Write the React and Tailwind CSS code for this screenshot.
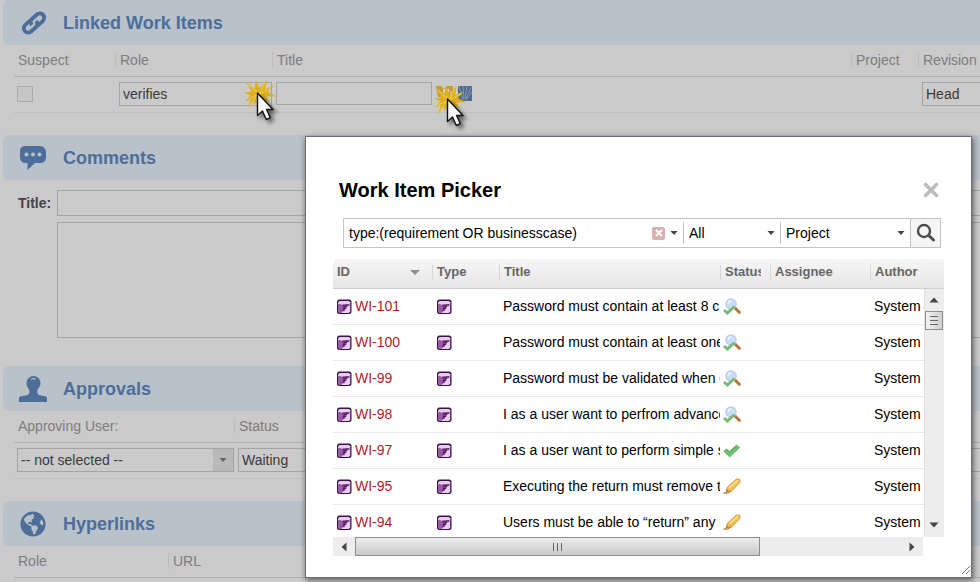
import React from "react";
import { FaGlobeAmericas } from "react-icons/fa";

function LinkIcon() {
  return (
    <svg viewBox="0 0 28 28" className="h-7 w-7" aria-hidden="true">
      <g transform="rotate(-42 15 14)" fill="none" stroke="#4c6e99" strokeWidth="3.8">
        <path d="M14 9.600H7.200a4.400 4.400 0 0 0 0 8.800h6.300a4.400 4.400 0 0 0 4.400-4.400" />
        <path d="M16 18.400h6.800a4.400 4.400 0 0 0 0-8.800h-6.300a4.400 4.400 0 0 0-4.400 4.400" />
      </g>
    </svg>
  );
}

function CommentIcon() {
  return (
    <svg viewBox="0 0 28 28" className="h-7 w-7" aria-hidden="true">
      <path d="M6 2h15a6 6 0 0 1 6 6v5.500a5.500 5.500 0 0 1-5.500 5.500H16l-7.500 7V19H6.500A5.500 5.500 0 0 1 1 13.500V7a5 5 0 0 1 5-5z" fill="#4c6e99" />
      <g fill="#b9c1cb">
        <circle cx="7.500" cy="10.500" r="2" />
        <circle cx="14" cy="10.500" r="2" />
        <circle cx="20.500" cy="10.500" r="2" />
      </g>
    </svg>
  );
}

function StampIcon() {
  return (
    <svg viewBox="0 0 28 28" className="h-7 w-7" aria-hidden="true">
      <path d="M14.500 1a7 7 0 0 1 7 7c0 3-1.300 4.200-2.500 6-.9 1.400-.9 2.600-.5 4 .4 1.500 1.500 2.200 3.500 2.500l4 .7c1.500.3 2 1 2 2.300V27H0v-3.500c0-1.300.5-2 2-2.300l4.500-.7c2-.3 3.300-1 3.700-2.500.4-1.400.4-2.600-.4-4C8.700 12.200 7.500 11 7.500 8a7 7 0 0 1 7-7z" fill="#4c6e99" />
      <path d="M11.500 5c.6-1.300 1.700-2 3-2s2.400.7 3 2c-.8-.4-1.800-.7-3-.7s-2.200.3-3 .7z" fill="#b9c1cb" />
    </svg>
  );
}

function RequirementIcon() {
  return (
    <svg viewBox="0 0 16 16" className="h-4 w-4 shrink-0" aria-hidden="true">
      <rect x="1" y="0.500" width="14.500" height="14.500" rx="2.500" fill="#3a1544" />
      <path d="M3.500 2h9.500l1.200 1.200v9.300L13 14H3.500L2 12.500v-9z" fill="#ebcaf3" />
      <path d="M2 5.500l1.500-.8 2 1 7.700-.4.300 1.500-3.300 1 .6 1.200-1.300 1-.7 1.400-1.600.8L5.500 14h-2L2 12.500z" fill="#9a58a8" />
      <path d="M6.500 6.300l6.700-.6M7 8l4-.6M7 9.600l3-.3M6.500 11.300l2-.2" fill="none" stroke="#451a50" strokeWidth="1.100" />
    </svg>
  );
}

function ReviewedIcon() {
  return (
    <svg viewBox="0 0 18 17" className="h-[17px] w-[18px]" aria-hidden="true">
      <path d="M11.500 9.500l4.800 4.800" stroke="#b5763d" strokeWidth="3" strokeLinecap="round" />
      <circle cx="8" cy="6" r="5.200" fill="#c7dcf5" stroke="#b4cdea" strokeWidth="1.200" />
      <path d="M5 5.500C5.500 3.500 7 3 8.500 3" fill="none" stroke="#f2f8ff" strokeWidth="1.500" />
      <path d="M1 12l3.400 3 7-6.500" fill="none" stroke="#78bb75" strokeWidth="3" />
    </svg>
  );
}

function ApprovedIcon() {
  return (
    <svg viewBox="0 0 18 17" className="h-[17px] w-[18px]" aria-hidden="true">
      <path d="M0.800 9.500l2.500-2.700 3.200 2.400 7-6.200L16.700 5.500l-10 9.500z" fill="#67b768" stroke="#58a75c" strokeWidth="0.600" />
      <path d="M2.300 9.200l4.200 3.500 9-8" fill="none" stroke="#8bd08a" strokeWidth="1" />
    </svg>
  );
}

function DraftIcon() {
  return (
    <svg viewBox="0 0 18 17" className="h-[17px] w-[18px]" aria-hidden="true">
      <path d="M13.300 1l3.500.2.400 3-8.200 8.600-4.200.4-.8-3.700z" fill="#f0bf55" stroke="#d69a36" strokeWidth="0.900" />
      <path d="M6.500 9.500l8.300-7" stroke="#fbe3a0" strokeWidth="1.600" />
      <path d="M4 9.500l1 3.700 4-.4-3.500 2.700L2.500 14z" fill="#b98a54" />
      <path d="M0.500 15.200l4-.2" stroke="#c79a62" strokeWidth="1.800" />
    </svg>
  );
}

function SearchIcon() {
  return (
    <svg viewBox="0 0 20 20" className="h-5 w-5" aria-hidden="true">
      <circle cx="8" cy="8" r="6" fill="none" stroke="#4d4d4d" strokeWidth="2.400" />
      <path d="M12.700 12.500l4.800 4.500" stroke="#4d4d4d" strokeWidth="3" strokeLinecap="round" />
    </svg>
  );
}

function Caret({ className = "text-[#444]" }) {
  return (
    <svg viewBox="0 0 8 4" className={`h-1 w-2 ${className}`} aria-hidden="true">
      <path d="M0.500 0h7L4 4z" fill="currentColor" />
    </svg>
  );
}

function ScrollArrow({ className = "" }) {
  return (
    <svg viewBox="0 0 10 10" className={`h-2.5 w-2.5 text-[#444] ${className}`} aria-hidden="true">
      <path d="M0.500 2.500h9L5 7.500z" fill="currentColor" />
    </svg>
  );
}

function ClickMark() {
  return (
    <svg viewBox="0 0 40 50" className="h-[50px] w-10" aria-hidden="true">
      <path
        d="M3.500 3.500L12.500 10.500L14 2.500L17.500 10L24.500 2L23 11L32 7.500L25.500 14L34.500 18.500L24 18.500L28 24L19 20.500L15 23L11.500 27L12 22L6 30.500L8.500 21.500L3 23.500L8 17.500L2 14.500L9.500 13.500Z"
        fill="#dfb01d"
      />
      <path d="M6 6l10 9M22.500 5l-5 11M29 9.500l-12 7M6 21.500l9-5M8 27l7-10" stroke="#ecc84a" strokeWidth="1.200" />
      <g className="drop-shadow-[3px_3px_2px_rgba(0,0,0,0.55)]">
        <path d="M15.500 15v22.500l5-4.500 3.800 8.500 4-1.800-3.700-8.200h6.400z" fill="#f8f8f8" stroke="#111" strokeWidth="1.400" strokeLinejoin="round" />
      </g>
    </svg>
  );
}

function SectionTitle({ icon, children }) {
  return (
    <div className="ml-[3px] flex h-[45px] items-center gap-4 rounded-l-md bg-[#b9c1cb] pl-4">
      <span className="flex w-7 justify-center">{icon}</span>
      <h2 className="text-lg font-bold text-[#4c6e99]">{children}</h2>
    </div>
  );
}

function HeadCell({ first, className = "", children }) {
  return (
    <th scope="col" className={`h-8 border-b border-[#b2b2b2] p-0 pb-0.5 text-left font-normal text-[#7d7d7d] ${className}`}>
      <div className={first ? "pl-1" : "flex h-4 items-center border-l border-[#bcbcbc] pl-1"}>{children}</div>
    </th>
  );
}

function FormCell({ first, children }) {
  return <td className={`h-9 border-b border-[#bebebe] p-0 pb-0.5 ${first ? "pl-[3px]" : "pl-1"}`}>{children}</td>;
}

const field = "border border-[#a3a5a5] bg-[#cacaca] px-[3px] text-[#3a3a3a] outline-none";
const formTable = "ml-3.5 w-[calc(100%-14px)] table-fixed border-separate border-spacing-0";

const items = [
  { id: "WI-101", title: "Password must contain at least 8 characters", status: "reviewed" },
  { id: "WI-100", title: "Password must contain at least one number", status: "reviewed" },
  { id: "WI-99", title: "Password must be validated when entered", status: "reviewed" },
  { id: "WI-98", title: "I as a user want to perfrom advanced search", status: "reviewed" },
  { id: "WI-97", title: "I as a user want to perform simple search", status: "approved" },
  { id: "WI-95", title: "Executing the return must remove the loan", status: "draft" },
  { id: "WI-94", title: "Users must be able to “return” any item", status: "draft" },
];

const statusIcons = { reviewed: <ReviewedIcon />, approved: <ApprovedIcon />, draft: <DraftIcon /> };

function PickerHead({ first, className = "", children }) {
  return (
    <th scope="col" className={`h-[30px] border-b border-[#cfcfcf] bg-linear-to-b from-[#f6f6f6] to-[#e6e6e6] p-0 pb-0.5 text-left text-[13px] text-[#666] ${className}`}>
      <div className={`flex h-4 items-center overflow-hidden ${first ? "pl-1" : "border-l border-[#d6d6d6] pl-1"}`}>{children}</div>
    </th>
  );
}

function Picker() {
  return (
    <div
      role="dialog"
      aria-label="Work Item Picker"
      className="absolute top-[136px] right-2 left-[305px] border border-[#6e6e6e] bg-white px-[27px] pt-[39px] pb-[21px] text-black shadow-[1px_2px_6px_rgba(0,0,0,0.6)]"
    >
      <div className="flex h-7 items-center justify-between pr-[5px] pl-1.5">
        <h2 className="text-xl font-bold">Work Item Picker</h2>
        <button type="button" aria-label="Close">
          <svg viewBox="0 0 16 16" className="h-4 w-4" aria-hidden="true">
            <path d="M2.500 2.500l11 11M13.500 2.500l-11 11" stroke="#bdbdbd" strokeWidth="3.600" strokeLinecap="round" />
          </svg>
        </button>
      </div>

      <form className="mt-3.5 mr-[3px] ml-2.5 flex h-[30px] border border-[#c4c4c4]" onSubmit={(e) => e.preventDefault()}>
        <div className="flex min-w-0 flex-1 items-center">
          <input aria-label="Query" defaultValue="type:(requirement OR businesscase)" className="min-w-0 flex-1 pl-[5px] outline-none" />
          <button type="button" aria-label="Clear" className="flex h-[13px] w-[13px] items-center justify-center rounded-xs bg-[#d9b1b1]">
            <svg viewBox="0 0 8 8" className="h-2 w-2" aria-hidden="true">
              <path d="M1 1l6 6M7 1L1 7" stroke="#fff" strokeWidth="2" />
            </svg>
          </button>
          <button type="button" aria-label="Query history" className="flex h-full w-[18px] items-center justify-center">
            <Caret />
          </button>
        </div>
        <div className="relative my-[3px] flex w-[97px] items-center border-l border-[#c4c4c4]">
          <select aria-label="Type filter" className="w-full appearance-none pl-[5px] outline-none">
            <option>All</option>
          </select>
          <span className="pointer-events-none absolute right-[5px]"><Caret /></span>
        </div>
        <div className="relative my-[3px] flex w-[130px] items-center border-l border-[#c4c4c4]">
          <select aria-label="Scope" className="w-full appearance-none pl-[5px] outline-none">
            <option>Project</option>
          </select>
          <span className="pointer-events-none absolute right-[5px]"><Caret /></span>
        </div>
        <button type="submit" aria-label="Search" className="flex w-[30px] items-center justify-center border-l border-[#c4c4c4] bg-[#f5f5f5]">
          <SearchIcon />
        </button>
      </form>

      <div className="relative mt-[11px] h-[278px] overflow-hidden">
        <table className="w-full table-fixed border-separate border-spacing-0">
          <thead>
            <tr>
              <PickerHead first className="w-[99px]">
                <span className="flex-1">ID</span>
                <svg viewBox="0 0 10 5" className="mr-3 h-[5px] w-2.5" aria-hidden="true">
                  <path d="M0 0h10L5 5z" fill="#8a8f94" />
                </svg>
              </PickerHead>
              <PickerHead className="w-[67px]">Type</PickerHead>
              <PickerHead>Title</PickerHead>
              <PickerHead className="w-[50px] pr-[9px]">Status</PickerHead>
              <PickerHead className="w-[100px]">Assignee</PickerHead>
              <PickerHead className="w-[74px]">Author</PickerHead>
            </tr>
          </thead>
          <tbody>
            {items.map((item) => (
              <tr key={item.id} className="*:h-9 *:border-b *:border-[#e9e9e9] *:p-0 *:pb-0.5">
                <td>
                  <div className="flex gap-[3px] pl-[3px]">
                    <span className="pt-[3px]"><RequirementIcon /></span>
                    <a href={`#${item.id}`} className="text-[#ad1a2e]">{item.id}</a>
                  </div>
                </td>
                <td><div className="pt-0.5 pl-1"><RequirementIcon /></div></td>
                <td><div className="overflow-hidden pl-1 whitespace-nowrap">{item.title}</div></td>
                <td><div className="pt-0.5 pl-[3px]">{statusIcons[item.status]}</div></td>
                <td />
                <td><div className="pl-1">System</div></td>
              </tr>
            ))}
          </tbody>
        </table>
        <div className="absolute top-[30px] right-0 bottom-0 flex w-5 flex-col items-center border-l border-[#e2e2e2] bg-[#ededed] pr-px" aria-hidden="true">
          <span className="flex h-[22px] items-center"><ScrollArrow className="rotate-180" /></span>
          <span className="flex h-[19px] w-full flex-col items-center justify-center gap-[3px] border border-[#8e8e8e] bg-linear-to-r from-[#f3f3f3] to-[#cfcfcf]">
            <i className="h-px w-2 bg-[#666]" />
            <i className="h-px w-2 bg-[#666]" />
            <i className="h-px w-2 bg-[#666]" />
          </span>
          <span className="mt-auto flex h-6 items-center"><ScrollArrow /></span>
        </div>
      </div>

      <div className="mr-[21px] flex h-[19px] items-center bg-[#ededed]" aria-hidden="true">
        <span className="flex w-[22px] justify-center"><ScrollArrow className="rotate-90" /></span>
        <span className="flex h-full w-[405px] items-center justify-center gap-[3px] border border-[#8e8e8e] bg-linear-to-b from-[#ececec] to-[#c9c9c9]">
          <i className="h-2 w-px bg-[#666]" />
          <i className="h-2 w-px bg-[#666]" />
          <i className="h-2 w-px bg-[#666]" />
        </span>
        <span className="mr-1.5 ml-auto flex"><ScrollArrow className="-rotate-90" /></span>
      </div>

      <svg viewBox="0 0 10 10" className="absolute right-0 bottom-0.5 h-2.5 w-2.5" aria-hidden="true">
        <path d="M1 9l8-8M5 9l4-4" stroke="#777" strokeWidth="1" />
      </svg>
    </div>
  );
}

export default function App() {
  return (
    <div className="relative h-screen overflow-hidden bg-[#cacaca] font-['Liberation_Sans',Arial,sans-serif] text-sm">
      <section>
        <SectionTitle icon={<LinkIcon />}>Linked Work Items</SectionTitle>
        <table className={formTable}>
          <thead>
            <tr>
              <HeadCell first className="w-[101px]">Suspect</HeadCell>
              <HeadCell className="w-[157px]">Role</HeadCell>
              <HeadCell>Title</HeadCell>
              <HeadCell className="w-[67px]">Project</HeadCell>
              <HeadCell className="w-[62px]">Revision</HeadCell>
            </tr>
          </thead>
          <tbody>
            <tr>
              <FormCell first>
                <input type="checkbox" aria-label="Suspect" className="block h-4 w-4 appearance-none border border-[#a9a9a9] bg-[#c6c6c6]" />
              </FormCell>
              <FormCell>
                <div className="relative">
                  <select aria-label="Role" className={`block h-6 w-[153px] appearance-none ${field}`}>
                    <option>verifies</option>
                  </select>
                  <span className="pointer-events-none absolute -top-1 left-[123px] z-10"><ClickMark /></span>
                </div>
              </FormCell>
              <FormCell>
                <div className="relative flex items-center gap-1">
                  <input aria-label="Title" className={`h-[23px] w-[156px] ${field}`} />
                  <button type="button" aria-label="Pick work item" className="h-[15px] w-[18px]">
                    <svg viewBox="0 0 18 15" className="h-full w-full" aria-hidden="true">
                      <path d="M0 0h5l3 3 3-3h6v5h-3v6H2z" fill="#c99a2e" />
                      <path d="M7 3h6v4H7z" fill="#d5d0c4" />
                    </svg>
                  </button>
                  <button type="button" aria-label="Open table" className="h-[15px] w-3.5">
                    <svg viewBox="0 0 14 15" className="h-full w-full" aria-hidden="true">
                      <rect width="14" height="15" fill="#4f6a8f" />
                      <path d="M1 0l4 14M5 0l1 13M9 0L7 13M13 1L8 13M14 6l-6 8" stroke="#8596ae" strokeWidth="1" />
                    </svg>
                  </button>
                  <span className="pointer-events-none absolute top-0.5 left-[156px] z-10"><ClickMark /></span>
                </div>
              </FormCell>
              <FormCell />
              <FormCell>
                <select aria-label="Revision" className={`block h-6 w-full appearance-none border-r-0 ${field}`}>
                  <option>Head</option>
                </select>
              </FormCell>
            </tr>
          </tbody>
        </table>
      </section>

      <section className="mt-[22px]">
        <SectionTitle icon={<CommentIcon />}>Comments</SectionTitle>
        <div className="mt-2.5 flex items-center pl-[18px]">
          <label htmlFor="comment-title" className="w-[39px] font-bold text-[#444]">Title:</label>
          <input id="comment-title" className={`h-[26px] min-w-0 flex-1 border-r-0 ${field}`} />
        </div>
        <div className="mt-1.5 flex pl-[57px]">
          <textarea aria-label="Comment" className={`h-[116px] flex-1 resize-none border-r-0 ${field}`} />
        </div>
      </section>

      <section className="mt-7">
        <SectionTitle icon={<StampIcon />}>Approvals</SectionTitle>
        <table className={formTable}>
          <thead>
            <tr>
              <HeadCell first className="w-[220px]">Approving User:</HeadCell>
              <HeadCell>Status</HeadCell>
            </tr>
          </thead>
          <tbody>
            <tr>
              <FormCell first>
                <div className="relative w-[217px]">
                  <select aria-label="Approving User" className={`block h-6 w-full appearance-none ${field}`}>
                    <option>-- not selected --</option>
                  </select>
                  <span className="pointer-events-none absolute top-px right-px flex h-[22px] w-5 items-center justify-center bg-[#b9b9b9]">
                    <Caret className="text-[#666]" />
                  </span>
                </div>
              </FormCell>
              <FormCell>
                <select aria-label="Status" className={`block h-6 w-full appearance-none border-r-0 ${field}`}>
                  <option>Waiting</option>
                </select>
              </FormCell>
            </tr>
          </tbody>
        </table>
      </section>

      <section className="mt-[22px]">
        <SectionTitle icon={<FaGlobeAmericas className="h-[26px] w-[26px] text-[#4c6e99]" />}>Hyperlinks</SectionTitle>
        <table className={formTable}>
          <thead>
            <tr>
              <HeadCell first className="w-[154px]">Role</HeadCell>
              <HeadCell>URL</HeadCell>
            </tr>
          </thead>
        </table>
      </section>

      <Picker />
    </div>
  );
}
